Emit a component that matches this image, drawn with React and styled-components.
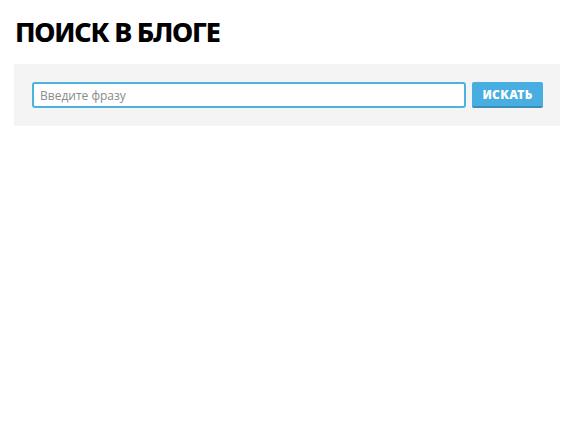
import React from "react";
import styled, { createGlobalStyle } from "styled-components";

const Global = createGlobalStyle`
  html, body { margin: 0; padding: 0; background: #fff; }
  body { font-family: "Open Sans", "Liberation Sans", sans-serif; }
  * { box-sizing: border-box; }
`;

const Page = styled.div`
  padding: 14px 11px 0 14px;
`;

const Title = styled.h1`
  margin: 0 0 14px 1px;
  font-family: "Noto Sans", "Open Sans", sans-serif;
  font-weight: 800;
  font-size: 27px;
  line-height: 36px;
  letter-spacing: -1.2px;
  color: #000;
  text-transform: uppercase;
`;

const Panel = styled.form`
  display: flex;
  align-items: stretch;
  gap: 6px;
  background: #f4f4f4;
  padding: 18px 17px 18px 18px;
`;

const Input = styled.input`
  flex: 1;
  height: 26px;
  border: 2px solid #4db2dc;
  border-radius: 3px;
  padding: 0 6px;
  font-family: "Open Sans", sans-serif;
  font-size: 12px;
  color: #333;
  background: #fff;
  outline: none;
  &::placeholder { color: #8a8a8a; }
`;

const Button = styled.button`
  width: 71px;
  height: 26px;
  border: none;
  border-bottom: 2px solid #3a8fb8;
  border-radius: 2px;
  background: #48ade0;
  color: #fff;
  font-family: "Noto Sans", "Open Sans", sans-serif;
  font-weight: 900;
  font-size: 12px;
  letter-spacing: 0.3px;
  padding: 0;
  cursor: pointer;
`;

export default function App() {
  return (
    <>
      <Global />
      <Page>
        <Title>Поиск в блоге</Title>
        <Panel onSubmit={(e) => e.preventDefault()}>
          <Input placeholder="Введите фразу" />
          <Button type="submit">ИСКАТЬ</Button>
        </Panel>
      </Page>
    </>
  );
}
